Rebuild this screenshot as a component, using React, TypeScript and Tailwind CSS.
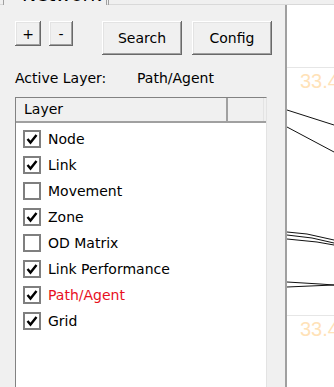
import React from "react";

const layers: { name: string; checked: boolean; active?: boolean }[] = [
  { name: "Node", checked: true },
  { name: "Link", checked: true },
  { name: "Movement", checked: false },
  { name: "Zone", checked: true },
  { name: "OD Matrix", checked: false },
  { name: "Link Performance", checked: true },
  { name: "Path/Agent", checked: true, active: true },
  { name: "Grid", checked: true },
];

function Btn({ children, className }: { children: React.ReactNode; className: string }) {
  return (
    <button
      className={`flex items-center justify-center bg-[#f0f0f0] text-black text-[14px] leading-none shadow-[inset_-1px_-1px_0_#696969,inset_1px_1px_0_#ffffff,inset_-2px_-2px_0_#a0a0a0,inset_2px_2px_0_#e3e3e3] ${className}`}
    >
      {children}
    </button>
  );
}

function Check({ checked }: { checked: boolean }) {
  return (
    <div className="w-[18px] h-[18px] border-2 border-[#7f7f7f] bg-white flex items-center justify-center shrink-0">
      {checked && (
        <svg width="14" height="14" viewBox="0 0 14 14">
          <polyline points="2.5,7 5.5,10.5 11.5,3" fill="none" stroke="#000" strokeWidth="2.4" />
        </svg>
      )}
    </div>
  );
}

export default function App() {
  return (
    <div className="w-[334px] h-[387px] bg-[#f0f0f0] overflow-hidden flex flex-col font-['DejaVu_Sans',sans-serif] text-black">
      {/* tab strip */}
      <div className="h-[5px] shrink-0 flex border-b border-[#d9d9d9] relative">
        <div className="ml-[3px] w-[104px] h-[5px] border-l border-r border-[#a0a0a0] overflow-hidden relative bg-[#f0f0f0]">
          <span className="absolute left-[18px] top-[-16px] text-[19px] leading-[20px] whitespace-nowrap">Network</span>
        </div>
        <div className="ml-[1px] w-[1px] h-[5px] bg-[#a0a0a0]" />
      </div>

      <div className="flex-1 flex min-h-0">
        {/* left panel */}
        <div className="w-[285px] shrink-0 flex flex-col pt-[16px]">
          <div className="flex items-start pl-[15px]">
            <Btn className="w-[26px] h-[25px]">+</Btn>
            <Btn className="w-[24px] h-[25px] ml-[8px]">-</Btn>
            <Btn className="w-[80px] h-[34px] ml-[29px]">Search</Btn>
            <Btn className="w-[80px] h-[34px] ml-[10px]">Config</Btn>
          </div>

          <div className="flex pl-[15px] mt-[15px] text-[14px] leading-[17px]">
            <span className="w-[122px]">Active Layer:</span>
            <span>Path/Agent</span>
          </div>

          <div className="ml-[15px] mt-[10px] w-[252px] h-[300px] shrink-0 border-l border-t border-[#828282] border-r border-r-[#e3e3e3] bg-white flex flex-col">
            <div className="h-[25px] flex bg-[#f0f0f0] border-b-2 border-[#a0a0a0] text-[14px]">
              <div className="w-[212px] flex items-center pl-[8px] border-r-2 border-[#a0a0a0]">Layer</div>
              <div className="w-[36px] border-r border-[#e3e3e3]" />
            </div>
            <div className="flex flex-col pt-[3px]">
              {layers.map((l) => (
                <div key={l.name} className="h-[26px] flex items-center pl-[7px] gap-[7px]">
                  <Check checked={l.checked} />
                  <span className={`text-[14px] leading-none ${l.active ? "text-[#e8101e]" : "text-black"}`}>{l.name}</span>
                </div>
              ))}
            </div>
          </div>
        </div>

        {/* canvas */}
        <div className="flex-1 border-l-2 border-[#a0a0a0] bg-white relative overflow-hidden">
          <div className="flex flex-col">
            <div className="h-[62px]" />
            <div className="h-[1px] bg-[#e6e6e6]" />
            <div className="pl-[13px] pt-[2px] text-[20px] leading-[22px] text-[#ffe2b8] font-['Liberation_Sans',sans-serif] whitespace-nowrap">33.4</div>
            <div className="h-[223px]" />
            <div className="h-[1px] bg-[#e6e6e6]" />
            <div className="pl-[13px] pt-[2px] text-[20px] leading-[22px] text-[#ffe2b8] font-['Liberation_Sans',sans-serif] whitespace-nowrap">33.4</div>
          </div>
          <svg className="absolute inset-0" width="47" height="382" viewBox="0 0 47 382">
            <g fill="none" stroke="#111" strokeWidth="1">
              <polyline points="0,105 47,120" />
              <polyline points="0,122 47,147" />
              <polyline points="0,227 20,229 47,235" />
              <polyline points="0,230 25,233 47,238" />
              <polyline points="0,234 30,237 47,240" />
              <polyline points="0,277 33,279 47,280" />
              <polyline points="0,282 23,281 47,280" />
            </g>
          </svg>
        </div>
      </div>
    </div>
  );
}
